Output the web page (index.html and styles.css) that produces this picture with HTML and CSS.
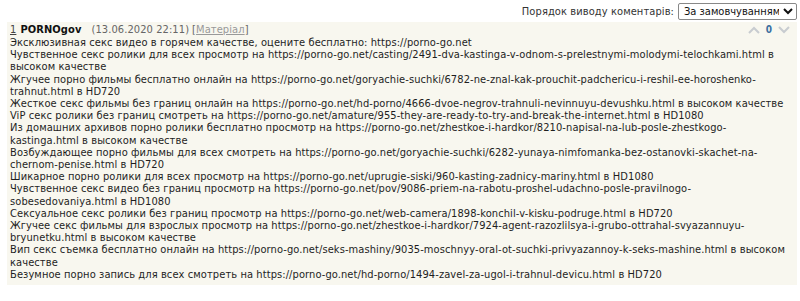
FILE: index.html
```html
<!DOCTYPE html>
<html>
<head>
<meta charset="utf-8">
<link rel="stylesheet" href="styles.css">
</head>
<body>
<div class="order-bar">
  <span class="order-label">Порядок виводу коментарів:</span>
  <select class="order-select"><option>За замовчуванням</option></select>
</div>
<div class="comment">
  <div class="comment-head">
    <div class="meta">
      <a class="num">1</a>
      <b class="author">PORNOgov</b>
      <span class="date">(13.06.2020 22:11)</span>
      <span class="mat">[<a>Матеріал</a>]</span>
    </div>
    <div class="votes">
      <svg width="12" height="8" viewBox="0 0 12 8"><path d="M1 7 L6 2 L11 7" fill="none" stroke="#c8ccd0" stroke-width="2"/></svg>
      <span class="score">0</span>
      <svg width="12" height="8" viewBox="0 0 12 8"><path d="M1 1 L6 6 L11 1" fill="none" stroke="#c8ccd0" stroke-width="2"/></svg>
    </div>
  </div>
  <div class="comment-text">Эксклюзивная секс видео в горячем качестве, оцените бесплатно: https://porno-go.net<br>Чувственное секс ролики для всех просмотр на https://porno-go.net/casting/2491-dva-kastinga-v-odnom-s-prelestnymi-molodymi-telochkami.html в высоком качестве<br>Жгучее порно фильмы бесплатно онлайн на https://porno-go.net/goryachie-suchki/6782-ne-znal-kak-prouchit-padchericu-i-reshil-ee-horoshenko-trahnut.html в HD720<br>Жесткое секс фильмы без границ онлайн на https://porno-go.net/hd-porno/4666-dvoe-negrov-trahnuli-nevinnuyu-devushku.html в высоком качестве<br>ViP секс ролики без границ смотреть на https://porno-go.net/amature/955-they-are-ready-to-try-and-break-the-internet.html в HD1080<br>Из домашних архивов порно ролики бесплатно просмотр на https://porno-go.net/zhestkoe-i-hardkor/8210-napisal-na-lub-posle-zhestkogo-kastinga.html в высоком качестве<br>Возбуждающее порно фильмы для всех смотреть на https://porno-go.net/goryachie-suchki/6282-yunaya-nimfomanka-bez-ostanovki-skachet-na-chernom-penise.html в HD720<br>Шикарное порно ролики для всех просмотр на https://porno-go.net/uprugie-siski/960-kasting-zadnicy-mariny.html в HD1080<br>Чувственное секс видео без границ просмотр на https://porno-go.net/pov/9086-priem-na-rabotu-proshel-udachno-posle-pravilnogo-sobesedovaniya.html в HD1080<br>Сексуальное секс ролики без границ просмотр на https://porno-go.net/web-camera/1898-konchil-v-kisku-podruge.html в HD720<br>Жгучее секс фильмы для взрослых просмотр на https://porno-go.net/zhestkoe-i-hardkor/7924-agent-razozlilsya-i-grubo-ottrahal-svyazannuyu-bryunetku.html в высоком качестве<br>Вип секс съемка бесплатно онлайн на https://porno-go.net/seks-mashiny/9035-moschnyy-oral-ot-suchki-privyazannoy-k-seks-mashine.html в высоком качестве<br>Безумное порно запись для всех смотреть на https://porno-go.net/hd-porno/1494-zavel-za-ugol-i-trahnul-devicu.html в HD720</div>
</div>
</body>
</html>
```

FILE: styles.css
```css
html, body {
  margin: 0;
  padding: 0;
  background: #fff;
}
body {
  font-family: "DejaVu Sans Condensed", "DejaVu Sans", Verdana, sans-serif;
  font-stretch: condensed;
  font-size: 11px;
  letter-spacing: 0.09px;
  color: #1e1e1e;
  padding: 3px 3px 0 7px;
}
.order-bar {
  display: flex;
  justify-content: flex-end;
  align-items: center;
  gap: 4px;
  height: 17px;
  margin-bottom: 2px;
}
.order-label {
  color: #333;
}
.order-select {
  font-family: "DejaVu Sans Condensed", "DejaVu Sans", Verdana, sans-serif;
  font-stretch: condensed;
  font-size: 11px;
  height: 17px;
  width: 119px;
  border: 1px solid #888;
  border-radius: 2px;
  background: #fff;
  color: #111;
  padding: 0 1px;
}
.comment {
  background: #f8f7ef;
  padding: 0 3px 4px 3px;
}
.comment-head {
  display: flex;
  justify-content: space-between;
  align-items: center;
  height: 13px;
  padding-top: 1px;
  margin-bottom: 1px;
}
.meta {
  display: flex;
  align-items: baseline;
}
.num {
  color: #444;
  text-decoration: underline;
  margin-right: 4px;
}
.author {
  color: #111;
  margin-right: 10px;
}
.date {
  color: #666;
  margin-right: 3px;
}
.mat {
  color: #666;
}
.mat a {
  color: #999;
  text-decoration: underline;
}
.votes {
  display: flex;
  align-items: center;
  gap: 4px;
  margin-right: 4px;
}
.score {
  color: #3a6fa0;
  font-weight: bold;
  font-size: 10px;
  margin: 0 2px;
}
.comment-text {
  line-height: 12.2px;
}
```
